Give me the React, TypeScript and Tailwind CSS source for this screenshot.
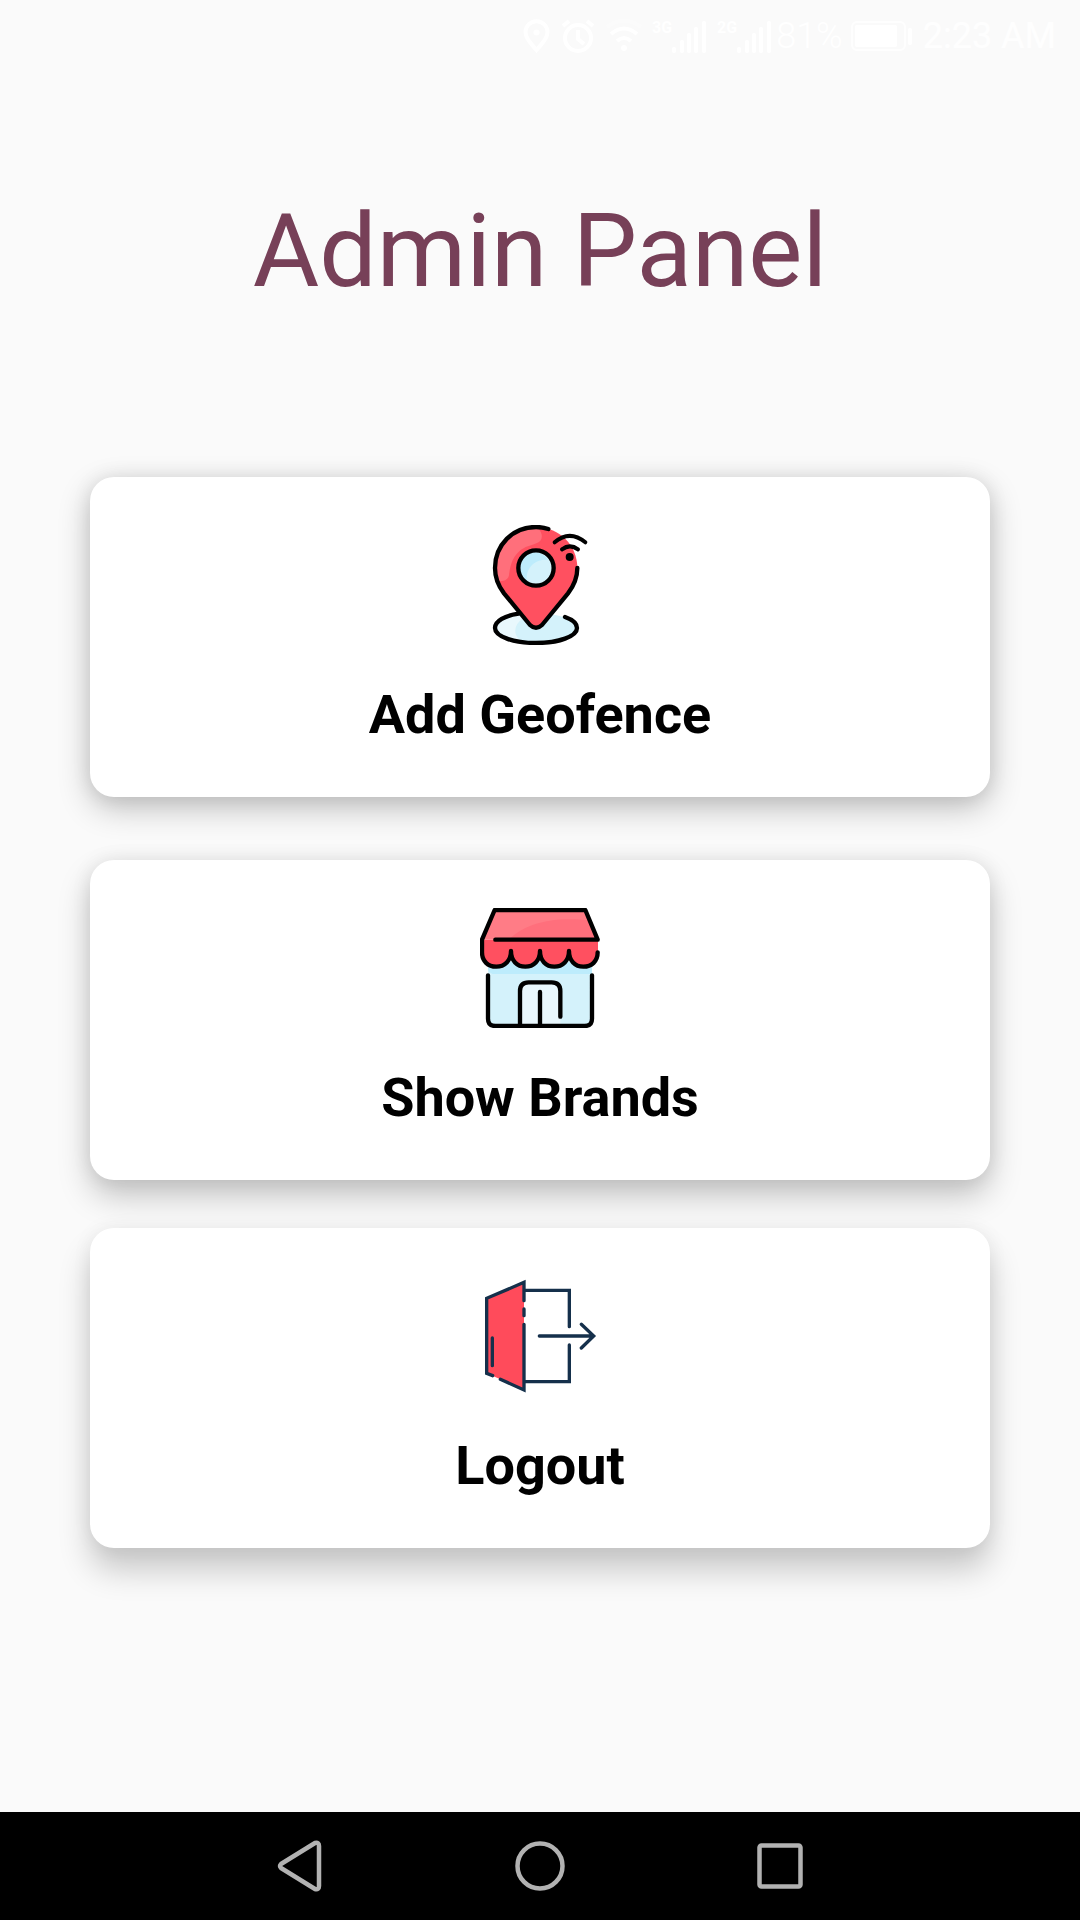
import type { ReactNode } from "react";

function SignalBars({ label }: { label: string }) {
  return (
    <div className="flex items-start">
      <span className="text-[16px] leading-4 font-bold">{label}</span>
      <svg className="mt-px h-8 w-[35px]" viewBox="0 0 35 32" fill="currentColor" aria-hidden="true">
        <rect x="0" y="26" width="4" height="6" rx="2" />
        <rect x="8" y="19" width="4" height="13" rx="2" />
        <rect x="15" y="12" width="4" height="20" rx="2" />
        <rect x="22" y="6" width="4" height="26" rx="2" />
        <rect x="30" y="0" width="4" height="32" rx="2" />
      </svg>
    </div>
  );
}

function StatusBar() {
  return (
    <header className="flex h-[72px] items-center justify-end pr-6 text-white">
      <svg className="h-[34px] w-[27px]" viewBox="0 0 27 34" fill="none" stroke="currentColor" strokeWidth="4" aria-hidden="true">
        <path d="M13.500 31C9 25.500 2.500 20 2.500 13.200a11 11 0 0 1 22 0C24.500 20 18 25.500 13.500 31Z" />
        <circle cx="13.500" cy="13.500" r="3" fill="currentColor" stroke="none" />
      </svg>
      <svg className="ml-3 h-[34px] w-8" viewBox="0 0 32 34" fill="none" stroke="currentColor" strokeWidth="4" aria-hidden="true">
        <circle cx="16" cy="19" r="13" />
        <path d="M16 11v9l6 5M1 7l6-5M31 7l-6-5" />
      </svg>
      <svg className="ml-3 h-[34px] w-9" viewBox="0 0 36 34" fill="none" stroke="currentColor" strokeWidth="4" aria-hidden="true">
        <path d="M1 8q17-13 34 0" opacity=".3" />
        <path d="M5 15q13-11 26 0M11 22q7-6 14 0" />
        <circle cx="18" cy="29" r="3" fill="currentColor" stroke="none" />
      </svg>
      <div className="ml-[10px] flex gap-[10px]">
        <SignalBars label="3G" />
        <SignalBars label="2G" />
      </div>
      <span className="ml-1 text-[36px] leading-10 font-light">81%</span>
      <svg className="ml-2 h-[30px] w-[62px]" viewBox="0 0 62 30" fill="none" stroke="currentColor" strokeWidth="2" aria-hidden="true">
        <rect x="1" y="1" width="53" height="28" rx="5" opacity=".8" />
        <rect x="4" y="4" width="42" height="22" rx="2" fill="currentColor" stroke="none" />
        <rect x="57" y="7" width="4" height="17" rx="2" fill="currentColor" stroke="none" />
      </svg>
      <span className="ml-[10px] text-[36px] leading-10 text-white/80">2:23 AM</span>
    </header>
  );
}

function GeofenceIcon() {
  return (
    <svg className="size-[120px]" viewBox="30 45 360 360" fill="none" aria-hidden="true">
      <ellipse cx="198" cy="354" rx="123" ry="45" fill="#d4f2fb" />
      <path d="M150 311C105 318 75 333 75 354c0 22 38 40 85 44-32-20-32-50-2-73Z" fill="#e9f8fd" />
      <path d="M198 51c-70 0-123 54-123 123 0 30 10 54 27 76l80 95q16 16 32 0l80-95c17-22 28-46 28-76 0-69-54-123-124-123Z" fill="#ff5060" />
      <path d="M198 51c-70 0-123 54-123 123 0 15 3 29 8 40 18 0 31-3 34-18 4-26 8-64 50-85 28-11 52-12 48-37-2-10-6-16-17-23Z" fill="#ff6f7b" />
      <circle cx="198" cy="174" r="53" fill="#d4f2fb" />
      <path d="M171 215c-6-39 23-70 64-65-18-27-57-33-78-8-20 26-11 59 14 73Z" fill="#bdecfc" />
      <g stroke="#000" strokeWidth="13" strokeLinecap="round" strokeLinejoin="round">
        <circle cx="198" cy="174" r="53" />
        <path d="M235 57q-18-6-37-6C128 51 75 105 75 174c0 30 10 54 27 76l78 95q18 17 36 0l78-95c17-22 28-46 28-76" />
        <path d="M146 311C105 317 75 333 75 354c0 25 55 45 123 45s123-20 123-45c0-13-13-25-36-33" strokeLinejoin="miter" />
        <path d="M254 97q45-39 92 0M276 118q24-18 48 0" strokeWidth="12" />
      </g>
      <circle cx="299" cy="141" r="12" fill="#000" />
    </svg>
  );
}

function StoreIcon() {
  return (
    <svg className="size-[120px]" viewBox="30 39 360 360" fill="none" aria-hidden="true">
      <path d="M54 200h312v173q0 20-20 20H74q-20 0-20-20Z" fill="#d4f2fb" />
      <path d="M54 200h312v37H68q-14-6-14-16Z" fill="#bdecfc" />
      <path d="M150 393V288q0-26 26-26h69q26 0 26 26v105Z" fill="#e9f7fd" />
      <path d="M36 134h348v40q0 41-43 41t-44-47q0 47-44 47t-43-47q0 47-43 47t-44-47q0 47-44 47t-43-41Z" fill="#ff5060" />
      <path d="M74 45h272l38 89H36Z" fill="#ff7c86" />
      <path d="M116 134c45-46 125-71 242-58l26 58Z" fill="#ff6f7c" />
      <g stroke="#000" strokeWidth="13" strokeLinecap="round" strokeLinejoin="round">
        <path d="M76 134h307L346 45H74L36 134v38c0 27 18 43 43 43s44-18 44-47c0 29 18 47 43 47s44-18 44-47c0 29 18 47 43 47s44-18 44-47c0 29 18 47 43 47s43-16 43-43" />
        <path d="M54 241v130q0 22 22 22h268q22 0 22-22V241M150 391V288q0-26 26-26h69q26 0 26 26v77M210 291v100" />
      </g>
    </svg>
  );
}

function LogoutIcon() {
  return (
    <svg className="size-[120px]" viewBox="30 33 360 360" fill="none" aria-hidden="true">
      <path d="M50 100 162 51v323L50 325Z" fill="#ff4b5b" />
      <g stroke="#15304b" strokeWidth="10" strokeLinecap="round" strokeLinejoin="miter">
        <path d="M68 332 50 325V100L162 52v55M162 132v20M162 178v197L91 343" />
        <path d="M67 219v83M166 76h132v109M298 240v110H166M208 213h162M334 178l37 35-37 36" />
      </g>
    </svg>
  );
}

function MenuCard({ label, icon, className }: { label: string; icon: ReactNode; className: string }) {
  return (
    <button
      type="button"
      className={`flex w-full flex-col items-center rounded-[24px] bg-white pt-12 pb-[50px] text-black ${className}`}
    >
      {icon}
      <span className="mt-[38px] text-[54px] leading-16 font-bold">{label}</span>
    </button>
  );
}

export default function App() {
  return (
    <div className="flex min-h-screen flex-col bg-[#fafafa] font-[Roboto,sans-serif]">
      <StatusBar />
      <main className="flex flex-col px-[90px] pb-20">
        <h1 className="mt-[119px] text-center text-[102px] leading-[120px] text-[#774058]">Admin Panel</h1>
        <MenuCard
          label="Add Geofence"
          icon={<GeofenceIcon />}
          className="mt-[166px] shadow-[0_0_20px_rgba(0,0,0,0.08),0_11px_32px_rgba(0,0,0,0.24)]"
        />
        <MenuCard
          label="Show Brands"
          icon={<StoreIcon />}
          className="mt-[63px] shadow-[0_0_20px_rgba(0,0,0,0.08),0_16px_32px_rgba(0,0,0,0.22)]"
        />
        <MenuCard
          label="Logout"
          icon={<LogoutIcon />}
          className="mt-12 shadow-[0_0_20px_rgba(0,0,0,0.06),0_22px_32px_rgba(0,0,0,0.2)]"
        />
      </main>
      <nav aria-label="System" className="mt-auto flex h-[108px] justify-center bg-black text-[#b2b2b2]">
        <button type="button" aria-label="Back" className="flex w-60 items-center justify-center">
          <svg className="h-[54px] w-12" viewBox="0 0 48 54" fill="none" stroke="currentColor" strokeWidth="4.500" strokeLinejoin="round">
            <path d="M5 25 39 4q4-1 4 3v40q0 4-4 3L5 29q-2-2 0-4Z" />
          </svg>
        </button>
        <button type="button" aria-label="Home" className="flex w-60 items-center justify-center">
          <svg className="size-[50px]" viewBox="0 0 50 50" fill="none" stroke="currentColor" strokeWidth="4.500">
            <circle cx="25" cy="25" r="22.500" />
          </svg>
        </button>
        <button type="button" aria-label="Recent apps" className="flex w-60 items-center justify-center">
          <svg className="size-[46px]" viewBox="0 0 46 46" fill="none" stroke="currentColor" strokeWidth="4.500" strokeLinejoin="round">
            <rect x="2.500" y="2.500" width="41" height="41" rx="2" />
          </svg>
        </button>
      </nav>
    </div>
  );
}
